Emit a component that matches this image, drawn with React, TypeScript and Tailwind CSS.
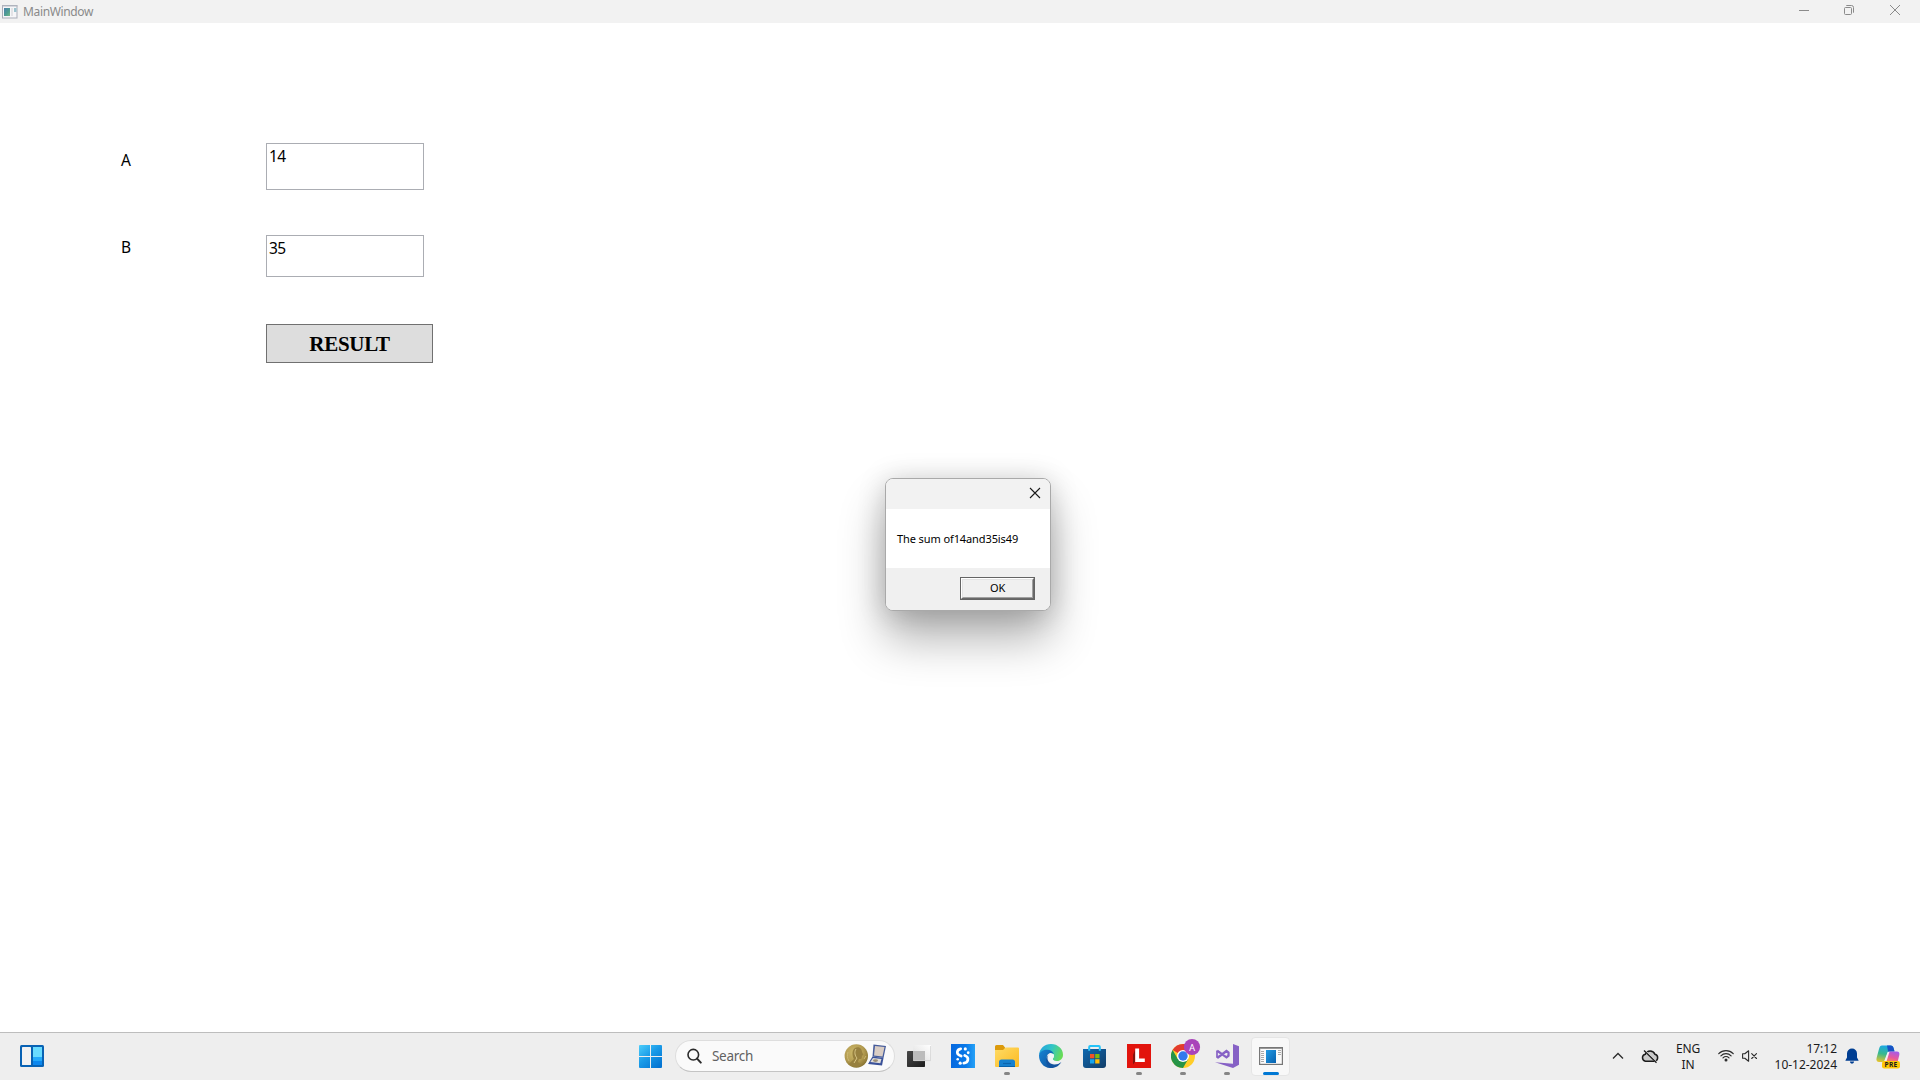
import type { ReactNode } from "react";

function AppIcon() {
  return (
    <svg width="16" height="14" viewBox="0 0 16 14">
      <rect x="0.5" y="0.5" width="14.5" height="12.5" fill="#f6f6f8" stroke="#a9adb8" />
      <path d="M0 1h15.5" stroke="#b4b8c2" />
      <rect x="2" y="3" width="6" height="8" fill="url(#appg)" />
      <rect x="9" y="3" width="2" height="8" fill="#e3e3e6" />
      <rect x="12" y="3" width="2.5" height="4" fill="#9cc4cf" />
      <defs>
        <linearGradient id="appg" x1="0" y1="0" x2="1" y2="1">
          <stop stopColor="#4a7fae" />
          <stop offset="0.6" stopColor="#4f9f90" />
          <stop offset="1" stopColor="#79b98a" />
        </linearGradient>
      </defs>
    </svg>
  );
}

function TitleBar() {
  return (
    <header className="flex h-[23px] shrink-0 items-center bg-[#f2f2f2] pl-[2px] text-[#8a8a8a]">
      <AppIcon />
      <span className="ml-[5px] text-[12px] leading-[23px] tracking-[-0.36px]">MainWindow</span>
      <div className="ml-auto mr-[2px] flex items-center text-[#8b8b8b]">
        <div className="flex h-[23px] w-[44px] justify-center pt-[5px]">
          <svg width="10" height="10"><path d="M0 5.5h10" stroke="currentColor" /></svg>
        </div>
        <div className="flex h-[23px] w-[46px] justify-center pt-[5px]">
          <svg width="10" height="10" fill="none" stroke="currentColor">
            <rect x="0.5" y="2.5" width="7" height="7" rx="1" />
            <path d="M2.3 0.5H7.5a2 2 0 0 1 2 2V7.7" />
          </svg>
        </div>
        <div className="flex h-[23px] w-[46px] justify-center pt-[5px]">
          <svg width="10" height="10"><path d="M0 0l10 10M10 0L0 10" stroke="currentColor" /></svg>
        </div>
      </div>
    </header>
  );
}

function Dialog() {
  return (
    <div className="absolute left-[885px] top-[478px] flex h-[133px] w-[166px] flex-col overflow-hidden rounded-[8px] border border-[#a9a9a9] bg-white shadow-[0_28px_46px_rgba(0,0,0,0.3),0_2px_28px_rgba(0,0,0,0.18)]">
      <div className="flex h-[30px] shrink-0 justify-end bg-[#f2f2f2] pr-[10px] pt-[9px]">
        <svg width="10" height="10" className="overflow-visible"><path d="M0 0l10 10M10 0L0 10" stroke="#1a1a1a" strokeWidth="1.1" /></svg>
      </div>
      <div className="flex h-[59px] shrink-0 items-center pl-[11px] pt-[2px] text-[11px] tracking-[-0.1px] text-black">
        <span className="whitespace-nowrap">The sum of14and35is49</span>
      </div>
      <div className="flex grow justify-end bg-[#f0f0f0] pr-[15px] pt-[9px]">
        <button className="h-[23px] w-[75px] border border-[#646464] bg-white">
          <span className="flex h-[21px] w-[73px] border-b-[1px] border-l border-r-[1px] border-t border-b-[#696969] border-l-white border-r-[#696969] border-t-white">
            <span className="flex grow items-center justify-center border border-b-[#a0a0a0] border-l-[#e3e3e3] border-r-[#a0a0a0] border-t-[#e3e3e3] bg-[#f0f0f0] pb-[2px] text-[11px] leading-none tracking-[-0.3px] text-black">
              OK
            </span>
          </span>
        </button>
      </div>
    </div>
  );
}

function Slot({ children, running = false }: { children: ReactNode; running?: boolean }) {
  return (
    <div className="relative flex h-[46px] w-[44px] shrink-0 items-center justify-center">
      {children}
      {running && <span className="absolute bottom-[4px] left-[19px] h-[3px] w-[6px] rounded-full bg-[#858585]" />}
    </div>
  );
}

function StartIcon() {
  return (
    <svg width="24" height="24" viewBox="0 0 24 24">
      <defs>
        <linearGradient id="win" gradientUnits="userSpaceOnUse" x1="0" y1="0" x2="20" y2="23">
          <stop stopColor="#4fd0fb" />
          <stop offset="0.5" stopColor="#1a9be8" />
          <stop offset="1" stopColor="#0474d2" />
        </linearGradient>
      </defs>
      <path fill="url(#win)" d="M1 1h10v11H0v-10a1 1 0 0 1 1-1zM12 1h10a1 1 0 0 1 1 1v10H12zM0 13h11v11H1a1 1 0 0 1-1-1zM12 13h11v10a1 1 0 0 1-1 1H12z" />
    </svg>
  );
}

function WidgetsIcon() {
  return (
    <svg width="24" height="22" viewBox="0 0 24 22">
      <rect width="24" height="22" rx="1.500" fill="#0862b4" />
      <rect x="2" y="2" width="9" height="18" rx="0.6" fill="#f2f2f2" />
      <rect x="13" y="2" width="9" height="10" fill="#69dcff" />
      <rect x="13" y="12" width="9" height="4" fill="#23aafc" />
      <rect x="13" y="16" width="9" height="4" fill="#0c87ee" />
    </svg>
  );
}

function SearchBox() {
  return (
    <div className="flex h-[32px] w-[220px] items-center rounded-full border border-[#dedede] border-b-[#c4c4c4] bg-[#fafafa] pl-[11px] pr-[7px]">
      <svg width="15" height="16" viewBox="0 0 15 16" fill="none" stroke="#2b2b2b">
        <circle cx="6.300" cy="6.700" r="5.300" strokeWidth="1.6" />
        <path d="M10.100 10.600l3.700 4" strokeWidth="2" strokeLinecap="round" />
      </svg>
      <span className="ml-[10px] pt-[2px] text-[13.5px] leading-none tracking-[-0.3px] text-[#616161]">Search</span>
      <svg className="ml-auto" width="43" height="26" viewBox="0 0 43 26">
        <defs>
          <radialGradient id="coin" cx="0.4" cy="0.35" r="0.7">
            <stop stopColor="#cdb96b" />
            <stop offset="0.6" stopColor="#b39b50" />
            <stop offset="1" stopColor="#84702f" />
          </radialGradient>
        </defs>
        <circle cx="12.300" cy="13" r="11.700" fill="url(#coin)" />
        <path d="M11 5c3-2 7 0 7 4l1.500 3-1.600.7c.3 3-1 3.700-3 3.300l-1 3 4 3c-4 3-10 2-13-1l5-5c-2-4-2-9 1.100-11z" fill="#97803f" />
        <path d="M12 6c-2 3-1 7 1 9l-3 5" stroke="#d7c585" fill="none" strokeWidth="1" />
        <path d="M4 9c-1 3-1 6 1 9M20 16l2-3" stroke="#cdb873" fill="none" />
        <path d="M29.500 1.500L42 3l-2.500 12-11-1.500z" fill="#465c9b" />
        <path d="M31 3l9.500 1-2 9.500-8.500-1z" fill="#d9cdc4" />
        <path d="M28.500 13.500l11 1.500-1.500 7.500-14-1.500z" fill="#3a5199" />
        <path d="M29 15l8.500 1-1.200 4.300-10-1.200z" fill="#e0ddd9" />
        <ellipse cx="31.500" cy="17.600" rx="2.500" ry="1.300" fill="#9b8e75" />
      </svg>
    </div>
  );
}

function TaskViewIcon() {
  return (
    <svg width="24" height="22" viewBox="0 0 24 22">
      <defs>
        <linearGradient id="tv" x1="0" y1="0" x2="1" y2="1">
          <stop stopColor="#484848" />
          <stop offset="1" stopColor="#1d1d1d" />
        </linearGradient>
        <linearGradient id="tvf" x1="1" y1="0" x2="0" y2="1">
          <stop stopColor="#ffffff" />
          <stop offset="1" stopColor="#dddddd" />
        </linearGradient>
      </defs>
      <rect y="6" width="18" height="16" rx="0.8" fill="url(#tv)" />
      <rect x="6" width="18" height="16" rx="0.8" fill="url(#tvf)" />
      <path d="M6 6h12v10H6z" fill="#bcbcbc" />
      <path d="M7 15.600h16.600V1" stroke="#d0d0d0" fill="none" strokeWidth="0.8" />
    </svg>
  );
}

function LinkedSIcon() {
  return (
    <svg width="24" height="24" viewBox="0 0 24 24">
      <defs>
        <linearGradient id="sb">
          <stop stopColor="#0769df" />
          <stop offset="0.6" stopColor="#0878e8" />
          <stop offset="1" stopColor="#25a1f7" />
        </linearGradient>
      </defs>
      <path fill="url(#sb)" d="M0 0h24v24H0z" />
      <g fill="none" stroke="#fff" strokeWidth="2.700" strokeLinecap="round">
        <path d="M9.700 4.800C5.700 5.500 5.200 9.800 8.500 11.300L10.200 12" />
        <path d="M12.800 19.200c4.700-.5 5.500-5.500 1.700-7.300l-.8-.4" />
        <path d="M17.200 8.600v.2" />
      </g>
      <circle cx="14.300" cy="4.900" r="1.600" fill="#fff" />
      <circle cx="9.200" cy="19.200" r="1.600" fill="#fff" />
      <circle cx="6.700" cy="15.200" r="1.300" fill="#fff" />
    </svg>
  );
}

function FolderIcon() {
  return (
    <svg width="24" height="24" viewBox="0 0 24 24">
      <defs>
        <linearGradient id="fold" x1="0" y1="0" x2="1" y2="1">
          <stop stopColor="#ffdc66" />
          <stop offset="1" stopColor="#fcb921" />
        </linearGradient>
      </defs>
      <path d="M0 2.500A1.500 1.500 0 0 1 1.500 1H8l2 2.500V8H0z" fill="#dc9a0b" />
      <path d="M0 6h8L10.500 3.500H23a1 1 0 0 1 1 1V22a1 1 0 0 1-1 1H1a1 1 0 0 1-1-1z" fill="url(#fold)" />
      <path d="M4 23v-5a2.500 2.500 0 0 1 2.500-2.500h11A2.500 2.500 0 0 1 20 18v5z" fill="#1781cf" />
      <path d="M4 22.500h16" stroke="#0963ac" />
      <path d="M8 19.500h8" stroke="#0d65ae" strokeWidth="1.200" />
    </svg>
  );
}

function EdgeIcon() {
  return (
    <svg width="24" height="24" viewBox="0 0 24 24">
      <defs>
        <linearGradient id="edt" x1="0" y1="0.2" x2="1" y2="0.5">
          <stop stopColor="#24a3df" />
          <stop offset="0.5" stopColor="#32c5c5" />
          <stop offset="1" stopColor="#68dc55" />
        </linearGradient>
        <linearGradient id="edb" x1="0" y1="0" x2="1" y2="1">
          <stop stopColor="#1685d4" />
          <stop offset="1" stopColor="#0d4d99" />
        </linearGradient>
      </defs>
      <path d="M0 11C.5 4.500 5.500 0 12 0c7 0 12 5 12 10.700 0 4-3 6.300-6.300 6.300-3 0-4.200-1.200-4-2.200 1.500-1.600 1-5-2-6C7 7.200 2 8.500 0 11z" fill="url(#edt)" />
      <path d="M0 11.500C1 7 5 5.500 8.500 5.700c3 .1 5.500 1.700 6.300 4.300-4-2.500-7.300.3-7 4.500.3 4.500 4 8 8.500 7.700C14 23.500 12.500 24 11 24 4.500 23.700 0 18 0 11.500z" fill="url(#edb)" />
      <path d="M9.500 10.700C7 14 9 20 15 20.500c3 .2 5-.7 7.300-2.500C20 22.500 15.500 24 12 24c-5-1-6.500-10-2.500-13.300z" fill="#12539f" />
      <path d="M14.800 10.300c-3-1.500-5.500.5-5.300 3.500.2 3.200 3.500 5.800 7.500 5.800 2 0 4-.7 5.500-2-4 1-8.600-.1-8.800-2.800 1.500-1.200 1.600-3 1.100-4.500z" fill="#f0f5f9" />
    </svg>
  );
}

function StoreIcon() {
  return (
    <svg width="24" height="24" viewBox="0 0 24 24">
      <defs>
        <linearGradient id="store" x1="0" y1="0" x2="1" y2="1">
          <stop stopColor="#0f68af" />
          <stop offset="1" stopColor="#123d68" />
        </linearGradient>
      </defs>
      <path d="M6.200 7V3A1 1 0 0 1 7.200 2h8.600a1 1 0 0 1 1 1v4" fill="none" stroke="#25c3f8" strokeWidth="2" />
      <path d="M0 5h23v16a3 3 0 0 1-3 3H3a3 3 0 0 1-3-3z" fill="url(#store)" />
      <path d="M6.200 5v1.800M16.800 5v1.800" stroke="#35c8fa" strokeWidth="2" />
      <path d="M7 10h4.300v4.300H7z" fill="#f35325" />
      <path d="M12.200 10h4.300v4.300h-4.300z" fill="#7fba0b" />
      <path d="M7 15.200h4.300v4.300H7z" fill="#16a5ed" />
      <path d="M12.200 15.200h4.300v4.300h-4.300z" fill="#ffbc09" />
    </svg>
  );
}

function RedLIcon() {
  return (
    <svg width="24" height="24" viewBox="0 0 24 24">
      <path fill="#e2140d" d="M0 0h24v24H0z" />
      <path d="M8 6v12l-2 2.500V11z" fill="#84130e" />
      <path d="M8.200 4.500h3.900v10h5.700V18H8.200z" fill="#fff" />
    </svg>
  );
}

function ChromeIcon() {
  return (
    <svg width="36" height="30" viewBox="0 0 36 30" className="absolute left-[10px] top-[5px]">
      <circle cx="12" cy="18" r="12" fill="#ffcd28" />
      <path d="M12 18L1.600 12A12 12 0 0 1 22.400 12z" fill="#e33b2e" />
      <path d="M12 6a12 12 0 0 1 10.400 6H12z" fill="#e33b2e" />
      <path d="M1.600 12A12 12 0 0 0 12 30l5.200-9L6.800 21z" fill="#269447" />
      <circle cx="12" cy="18" r="6" fill="#fff" />
      <circle cx="12" cy="18" r="4.700" fill="#3079ed" />
      <circle cx="21" cy="9" r="8.100" fill="#a943ba" />
      <text x="21" y="12.500" textAnchor="middle" fontSize="9.500" fill="#fff" fontFamily="Roboto, sans-serif">A</text>
    </svg>
  );
}

function VisualStudioIcon() {
  return (
    <svg width="24" height="24" viewBox="0 0 24 24">
      <path d="M18 0l6 2.300v18.500L18 24 0 18.300l18 1.500z" fill="#8661c5" />
      <path d="M2.200 6.800l9.300 6.600 2-1.700V8.500l-2-1.500-9.300 7" fill="none" stroke="#8661c5" strokeWidth="2.300" />
      <path d="M2 6.500v7.300" stroke="#8661c5" strokeWidth="1.700" />
    </svg>
  );
}

function WindowIcon() {
  return (
    <svg width="24" height="18" viewBox="0 0 24 18">
      <defs>
        <linearGradient id="wi" x1="0" y1="0" x2="1" y2="1">
          <stop stopColor="#249be4" />
          <stop offset="1" stopColor="#0762af" />
        </linearGradient>
      </defs>
      <rect x="0.600" y="0.600" width="22.800" height="16.800" fill="#fbfbfb" stroke="#777" strokeWidth="1.200" />
      <path d="M1 1.500h22" stroke="#999" />
      <rect x="7" y="3" width="10" height="13" fill="url(#wi)" />
      <path d="M2 4.500h3M2 6.500h3M2 8.500h3M2 10.500h3M2 12.500h3M2 14.500h3M19 3.500h3M19 5.500h3M19 7.500h3" stroke="#aaa" />
    </svg>
  );
}

function CloudOffIcon() {
  return (
    <svg width="18" height="15" viewBox="0 0 18 15" fill="none">
      <path d="M4.500 12.200a3.500 3.500 0 0 1-.2-6.900A5.200 5.200 0 0 1 13.900 5.300a3.500 3.500 0 0 1-.4 6.900z" fill="#c9c9c9" stroke="#1b1b1b" strokeWidth="1.500" />
      <path d="M4.500 2.300l11 11" stroke="#ededed" strokeWidth="1.800" />
      <path d="M3 1.500l12.500 12.300" stroke="#1b1b1b" strokeWidth="1.300" />
    </svg>
  );
}

function WifiIcon() {
  return (
    <svg width="16" height="13" viewBox="0 0 16 13" fill="none" stroke="#2b2b2b" strokeWidth="1.200" strokeLinecap="round">
      <path d="M.8 4.700a10 10 0 0 1 14.400 0M2.900 6.800a7.200 7.200 0 0 1 10.200 0M5 8.900a4.300 4.300 0 0 1 6 0" />
      <circle cx="8" cy="11" r="0.900" fill="#1b1b1b" />
    </svg>
  );
}

function MutedIcon() {
  return (
    <svg width="16" height="12" viewBox="0 0 16 12" fill="none" stroke="#2b2b2b" strokeWidth="1.100" strokeLinejoin="round" strokeLinecap="round">
      <path d="M.6 3.800h2.200L6.600.8v10.400L2.800 8.200H.6z" />
      <path d="M9.700 3.700l4.800 4.800M14.500 3.700L9.700 8.500" />
    </svg>
  );
}

function CopilotIcon() {
  return (
    <svg width="24" height="24" viewBox="0 0 24 24">
      <defs>
        <linearGradient id="cpa" x1="0.4" y1="0" x2="0.2" y2="1">
          <stop stopColor="#1ba8e5" />
          <stop offset="0.5" stopColor="#38b98e" />
          <stop offset="1" stopColor="#e9c42b" />
        </linearGradient>
        <linearGradient id="cpb" x1="0.7" y1="0" x2="0.3" y2="1">
          <stop stopColor="#a45bea" />
          <stop offset="0.6" stopColor="#e8589b" />
          <stop offset="1" stopColor="#fb8a55" />
        </linearGradient>
      </defs>
      <path d="M6 .5h8.500c2 0 2.700 1 3.300 3.200l.7 2.800h-4c-1.800 0-2.700 1-3.200 2.600L9.500 14c-.7 2.200-1.700 3-3.500 3H3.200C.7 17 0 15.200.6 13L3 4C3.600 1.500 4.500.5 6 .5z" fill="url(#cpa)" />
      <path d="M11 .5h3.500c2 0 2.700 1 3.300 3.200l.7 2.800h-4l-2.300.7z" fill="#1852c5" />
      <path d="M14.500 6.500h6.300c2.300 0 3 1.600 2.500 3.600l-1.600 6.400H8.500c1-.6 1.500-1.700 2-3.200l1.300-4.300c.5-1.700 1.300-2.500 2.700-2.500z" fill="url(#cpb)" />
      <path d="M11.600 7l2-.5-3 9.500H8.300z" fill="#f4f0f5" />
      <rect x="6" y="16" width="18" height="7.500" rx="2.200" fill="#fec708" />
      <text x="15" y="22.300" textAnchor="middle" fontSize="6.600" fontWeight="700" fill="#1b1b1b" fontFamily="Noto Sans, sans-serif" letterSpacing="0.3">PRE</text>
    </svg>
  );
}

function Taskbar() {
  return (
    <footer className="flex h-[48px] shrink-0 items-start border-t border-[#bdbdbd] bg-[#eeeeee] text-[#1b1b1b]">
      <div className="flex w-[629px] pl-[20px] pt-[12px]">
        <WidgetsIcon />
      </div>
      <div className="flex h-[46px] items-center">
        <div className="flex w-[46px] pl-[10px]">
          <StartIcon />
        </div>
        <div className="mr-[2px]"><SearchBox /></div>
        <Slot><TaskViewIcon /></Slot>
        <Slot><LinkedSIcon /></Slot>
        <Slot running><FolderIcon /></Slot>
        <Slot><EdgeIcon /></Slot>
        <Slot><StoreIcon /></Slot>
        <Slot running><RedLIcon /></Slot>
        <Slot running><ChromeIcon /></Slot>
        <Slot running><VisualStudioIcon /></Slot>
        <div className="relative ml-[2px] flex h-[39px] w-[39px] items-center justify-center rounded-[4px] border border-[#e5e5e5] bg-[#f8f8f8]">
          <WindowIcon />
          <span className="absolute bottom-0 left-[11px] h-[3px] w-[16px] rounded-full bg-[#0078d4]" />
        </div>
      </div>
      <div className="ml-auto flex h-[46px] items-center">
        <svg width="12" height="8" viewBox="0 0 12 8"><path d="M1 6.500L6 1.500l5 5" fill="none" stroke="#2b2b2b" strokeWidth="1.300" /></svg>
        <div className="ml-[17px]"><CloudOffIcon /></div>
        <div className="ml-[13px] w-[32px] pt-[2px] text-center text-[12px] leading-[16px] tracking-[-0.2px]">
          <div>ENG</div>
          <div>IN</div>
        </div>
        <div className="-mt-[1px] ml-[14px]"><WifiIcon /></div>
        <div className="ml-[8px]"><MutedIcon /></div>
        <div className="ml-[12px] w-[67px] whitespace-nowrap pt-[1px] text-right text-[12px] leading-[16px] tracking-[-0.02px]">
          <div>17:12</div>
          <div>10-12-2024</div>
        </div>
        <svg className="ml-[8px]" width="14" height="16" viewBox="0 0 14 16" fill="#003e92">
          <path d="M7 .5a5 5 0 0 1 5 5V9.500l1.500 2.700v.6H.5v-.6L2 9.500V5.500a5 5 0 0 1 5-5zM4.900 13.600h4.200a2.100 2.100 0 0 1-4.200 0z" />
        </svg>
        <div className="ml-[17px] mr-[20px] pt-[1px]"><CopilotIcon /></div>
      </div>
    </footer>
  );
}

export default function App() {
  return (
    <div className="relative flex h-[1080px] w-[1920px] flex-col overflow-hidden bg-white font-['Noto_Sans',sans-serif]">
      <TitleBar />
      <main className="grow pl-[121px] pt-[120px] text-[15.5px] leading-[22px] text-black">
        <div className="flex h-[92px] items-start">
          <span className="mt-[6px] w-[145px]">A</span>
          <div className="h-[47px] w-[158px] border border-[#abadb3] bg-white pl-[2px] pt-px tracking-[-0.5px]">14</div>
        </div>
        <div className="flex h-[89px] items-start">
          <span className="mt-px w-[145px]">B</span>
          <div className="h-[42px] w-[158px] border border-[#abadb3] bg-white pl-[2px] pt-px tracking-[-0.5px]">35</div>
        </div>
        <button className="ml-[145px] flex h-[39px] w-[167px] items-center justify-center border border-[#707070] bg-[#dddddd] font-['Liberation_Serif',serif] text-[21px] font-bold tracking-[-0.3px]">
          RESULT
        </button>
      </main>
      <Taskbar />
      <Dialog />
    </div>
  );
}
